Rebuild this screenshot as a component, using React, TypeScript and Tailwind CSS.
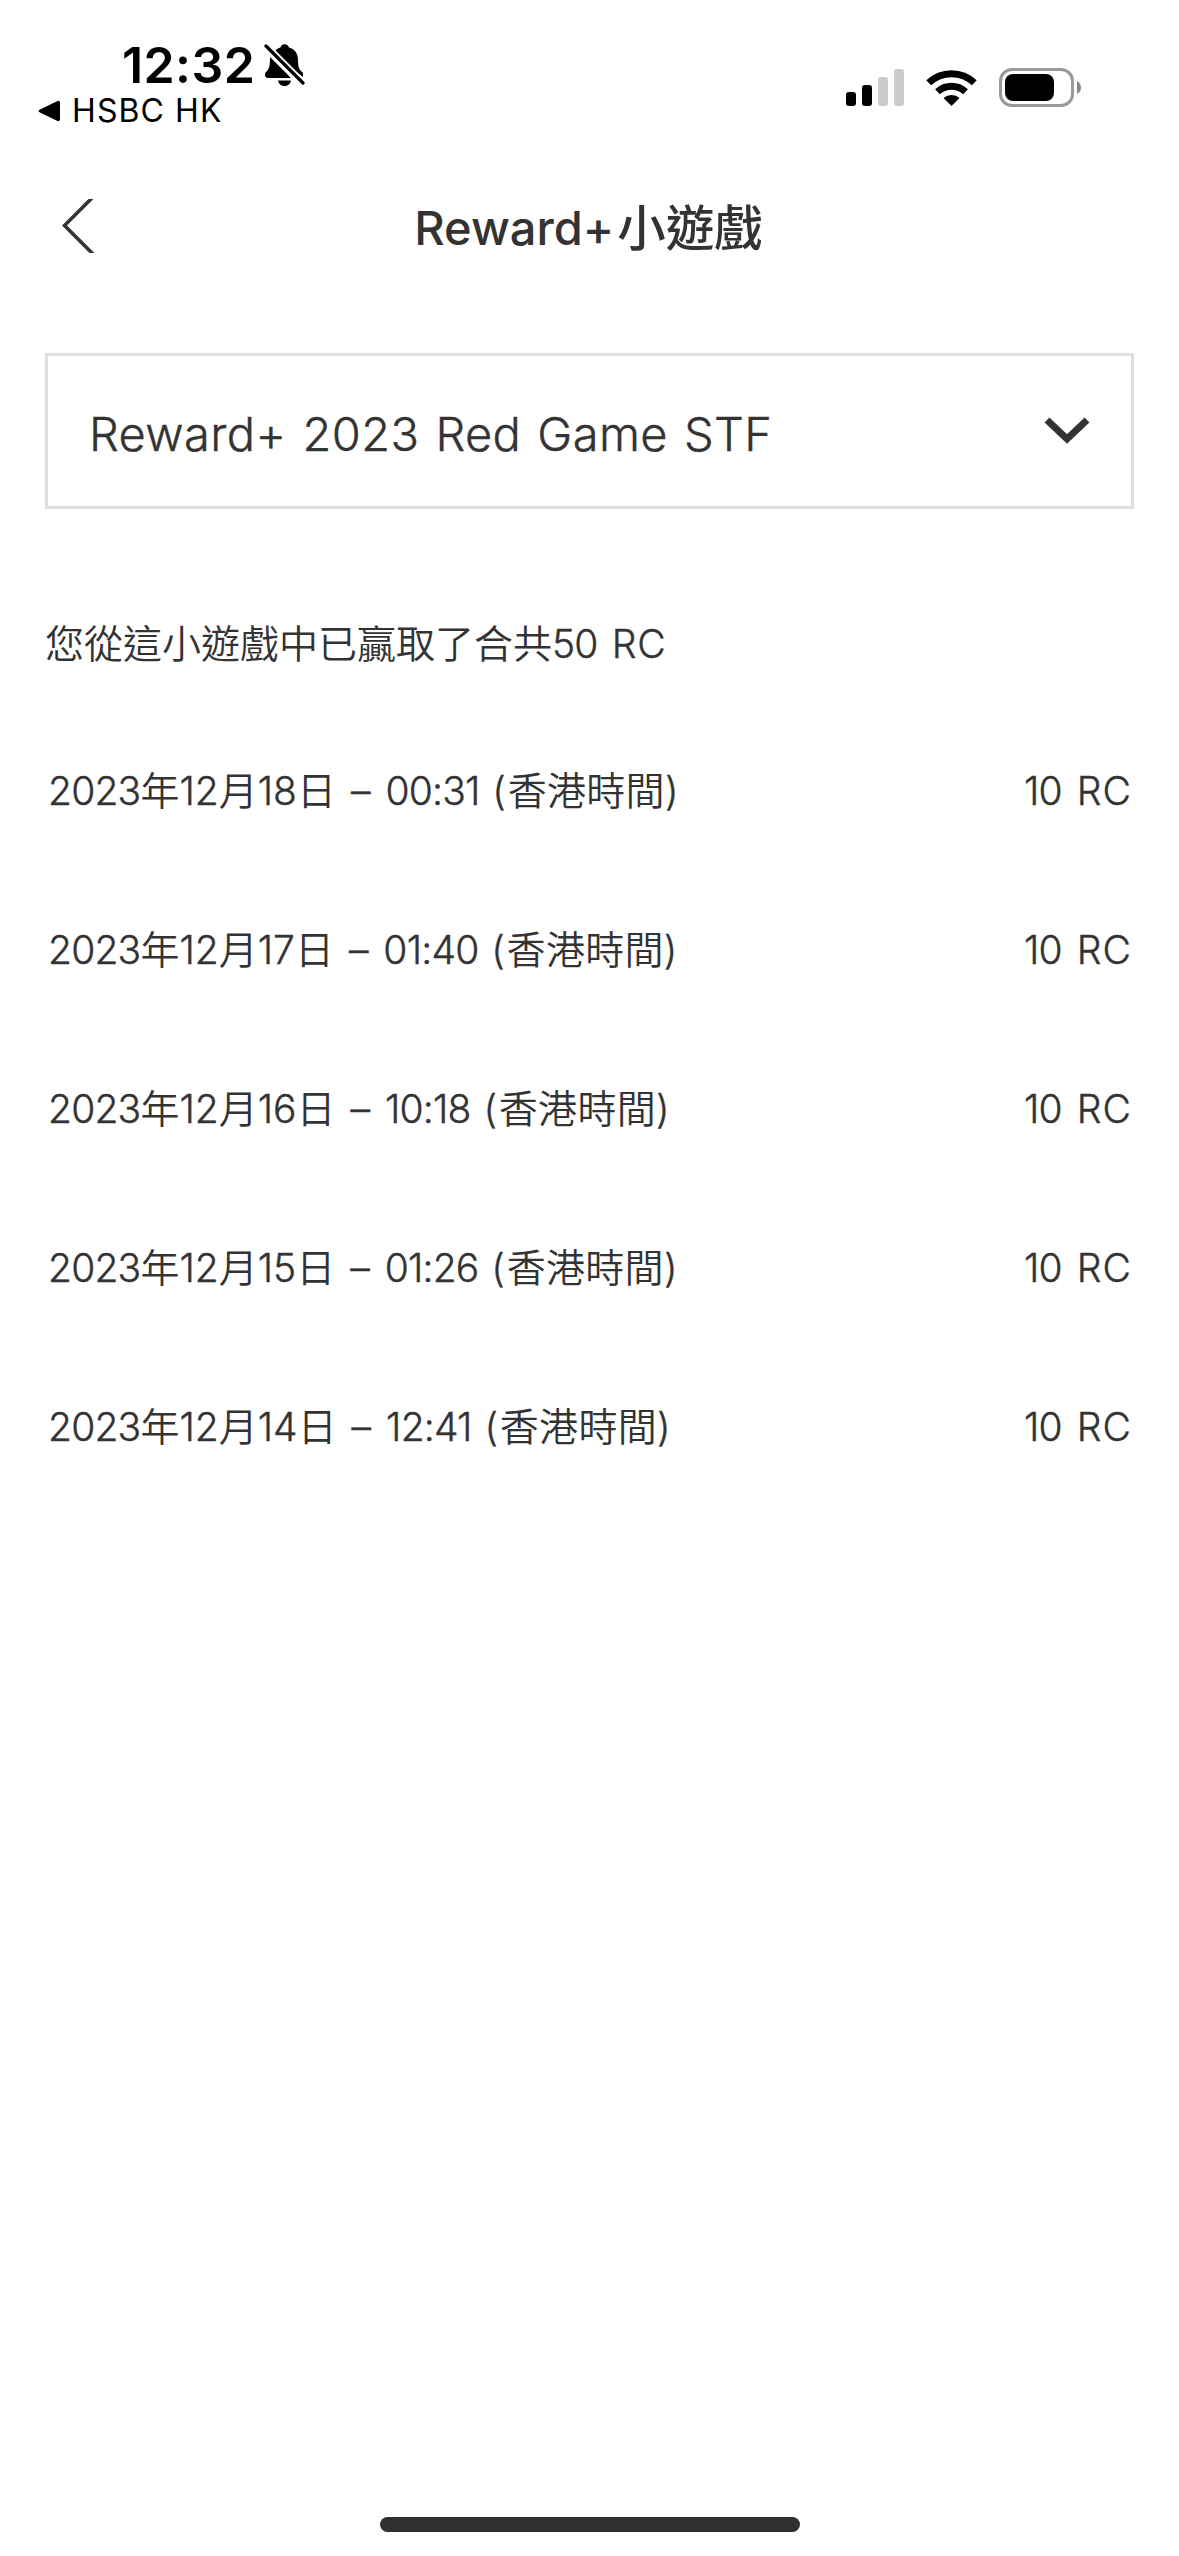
const entries = [
  { day: "18", time: "00:31" },
  { day: "17", time: "01:40" },
  { day: "16", time: "10:18" },
  { day: "15", time: "01:26" },
  { day: "14", time: "12:41" },
];

function StatusBar() {
  return (
    <div className="flex h-[153px] shrink-0 justify-between text-black">
      <div className="pl-[38px] pt-[33px]">
        <div className="flex h-[64px] items-center pl-[84px]">
          <span className="w-[131px] whitespace-nowrap text-[50px] leading-[64px] font-semibold tracking-[0.4px]">12:32</span>
          <svg className="ml-[11px] h-[44px] w-[42px]" viewBox="0 0 42 44">
            <path d="M9 12 C11 7 14 5 16.500 4.500 C17 0 24 0 25 4.500 C31 6 34 11 34 17 C34 25 35 26 39 30 V34 Z" />
            <path d="M6 14 L27 35 H4 C1 35 0 31 2 29 C5 26 6 24 6 14 Z" />
            <path d="M14 37.500 H27 C25.500 45 15.500 45 14 37.500 Z" />
            <path d="M2 3 L39 40" stroke="white" strokeWidth="7" />
            <path d="M2 3 L39 40" stroke="black" strokeWidth="3.200" strokeLinecap="round" />
          </svg>
        </div>
        <div className="flex h-[28px] items-center">
          <svg className="h-[22px] w-[22px]" viewBox="0 0 22 22">
            <path d="M2 9.500 L19 1.200 Q22 0 22 3 V19 Q22 22 19 20.800 L2 12.500 Q-1 11 2 9.500 Z" />
          </svg>
          <span className="pl-[12px] text-[32px] leading-[28px] tracking-[1.1px] whitespace-nowrap">HSBC HK</span>
        </div>
      </div>
      <div className="flex items-start pt-[68px] pr-[97px]">
        <svg className="mt-[1px] h-[37px] w-[58px]" viewBox="0 0 58 37">
          <rect y="23" width="10" height="14" rx="3" />
          <rect x="16" y="16" width="10" height="21" rx="3" />
          <rect x="32" y="8" width="10" height="29" rx="3" fill="#ccc" />
          <rect x="48" width="10" height="37" rx="3" fill="#ccc" />
        </svg>
        <svg className="mt-[1px] ml-[22px] h-[37px] w-[51px]" viewBox="0 0 51 37">
          <g fill="none" stroke="black" strokeWidth="7">
            <path d="M2.700 13.800 A33 33 0 0 1 48.300 13.800" />
            <path d="M11.500 22.700 A20.500 20.500 0 0 1 39.500 22.700" />
          </g>
          <path d="M17.500 29 A12 12 0 0 1 33.500 29 L25.500 37 Z" />
        </svg>
        <svg className="ml-[22px] h-[39px] w-[83px]" viewBox="0 0 83 39">
          <rect x="1.500" y="1.500" width="72" height="36" rx="11.500" fill="none" stroke="#999" strokeWidth="3" />
          <rect x="6" y="6" width="49" height="27" rx="8" />
          <path d="M78 13 Q82 15 82 19.500 Q82 24 78 26 Z" fill="#888" />
        </svg>
      </div>
    </div>
  );
}

function Cjk({ children }: { children: string }) {
  return <span className="tracking-[0px] [-webkit-text-stroke:0px]">{children}</span>;
}

function Tight({ children }: { children: string }) {
  return <span className="tracking-[-0.8px]">{children}</span>;
}

export default function App() {
  return (
    <div className="flex h-[2556px] w-[1179px] flex-col bg-white font-['Inter','Noto_Sans_CJK_TC',sans-serif] text-[#333]">
      <StatusBar />
      <header className="grid h-[150px] shrink-0 grid-cols-[1fr_auto_1fr] items-center">
        <button className="mb-[4px] ml-[62px] w-[32px]" aria-label="Back">
          <svg className="h-[54px] w-[32px]" viewBox="0 0 32 54" fill="none" stroke="#333" strokeWidth="3.600">
            <path d="M31 -2 L2.500 26.500 L31 55" />
          </svg>
        </button>
        <h1 className="pr-[2px] text-[47px] leading-[60px] font-medium whitespace-nowrap">
          Reward+<span className="relative top-[1px] ml-[3px] text-[48.5px]">小遊戲</span>
        </h1>
      </header>
      <main className="flex flex-col pt-[50px] pr-[45px] pl-[45px] text-[39px] font-[350] [-webkit-text-stroke:0.4px_#333]">
        <button className="flex h-[156px] items-center justify-between border-3 border-[#dedede] pr-[41px] pl-[41px] text-left">
          <span className="pt-[6px] text-[47px] tracking-[0.38px] [word-spacing:2.5px] whitespace-nowrap">Reward+ 2023 Red Game STF</span>
          <svg className="h-[28px] w-[46px]" viewBox="0 0 46 28" fill="none" stroke="#333" strokeWidth="7">
            <path d="M3 3 L23 22 L43 3" />
          </svg>
        </button>
        <p className="mt-[105px] h-[60px] leading-[60px] [word-spacing:3px] whitespace-nowrap">
          <Cjk>您從這小遊戲中已贏取了合共</Cjk>
          <Tight>50</Tight> <span className="tracking-[1px]">RC</span>
        </p>
        <ul className="mt-[38px]">
          {entries.map((entry) => (
            <li key={entry.day} className="flex h-[159px] items-center justify-between pr-[2px] pl-[3px] [word-spacing:4px]">
              <span className="whitespace-nowrap">
                <Tight>2023</Tight>
                <Cjk>年</Cjk>12<Cjk>月</Cjk>
                {entry.day}
                <Cjk>日</Cjk>
                {" – "}
                <Tight>{entry.time}</Tight>
                <span className="tracking-[1.8px] [word-spacing:0px]">{" ("}</span>
                <span className="tracking-[0.3px] [-webkit-text-stroke:0px]">香港時間</span>)
              </span>
              <span className="whitespace-nowrap">
                <Tight>10</Tight> <span className="tracking-[1px]">RC</span>
              </span>
            </li>
          ))}
        </ul>
      </main>
      <div className="mt-auto mb-[24px] h-[15px] w-[420px] shrink-0 self-center rounded-full bg-[#303030]" />
    </div>
  );
}
